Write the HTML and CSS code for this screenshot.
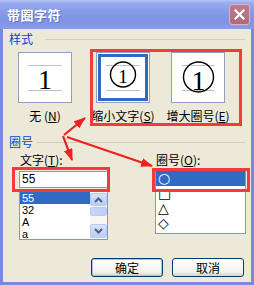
FILE: index.html
```html
<!DOCTYPE html>
<html>
<head>
<meta charset="utf-8">
<link rel="stylesheet" href="styles.css">
</head>
<body>
<div class="window">
  <div class="titlebar">
    <span class="title">带圈字符</span>
    <span class="close">
      <svg width="11" height="11" viewBox="0 0 11 11"><path d="M1.5 1.5 L9.5 9.5 M9.5 1.5 L1.5 9.5" stroke="#fff" stroke-width="2.2" stroke-linecap="square"/></svg>
    </span>
  </div>
  <div class="body">
    <div class="group-head"><span class="group-title">样式</span><span class="rule rule1"></span></div>
    <div class="styles">
      <div class="opt">
        <div class="preview">
          <svg width="52" height="49" viewBox="0 0 52 49">
            <line x1="9" y1="12.5" x2="43" y2="12.5" stroke="#C0C0C0"/>
            <line x1="9" y1="37.5" x2="43" y2="37.5" stroke="#C0C0C0"/>
            <text x="26" y="35.5" text-anchor="middle" class="digit" font-size="28">1</text>
          </svg>
        </div>
        <div class="opt-label">无 (<u>N</u>)</div>
      </div>
      <div class="opt opt2">
        <div class="preview selected">
          <svg width="52" height="49" viewBox="0 0 52 49">
            <line x1="9" y1="12.5" x2="43" y2="12.5" stroke="#C0C0C0"/>
            <line x1="9" y1="37.5" x2="43" y2="37.5" stroke="#C0C0C0"/>
            <circle cx="26" cy="21.5" r="12.5" fill="none" stroke="#000" stroke-width="1.4"/>
            <text x="26" y="30" text-anchor="middle" class="digit" font-size="19">1</text>
          </svg>
        </div>
        <div class="opt-label">缩小文字(<u>S</u>)</div>
      </div>
      <div class="opt opt3">
        <div class="preview">
          <svg width="52" height="49" viewBox="0 0 52 49">
            <line x1="10" y1="12.5" x2="42" y2="12.5" stroke="#C0C0C0"/>
            <line x1="10" y1="37.5" x2="42" y2="37.5" stroke="#C0C0C0"/>
            <circle cx="26.5" cy="24" r="15" fill="none" stroke="#000" stroke-width="1.4"/>
            <text x="26.5" y="37" text-anchor="middle" class="digit" font-size="28">1</text>
          </svg>
        </div>
        <div class="opt-label">增大圈号(<u>E</u>)</div>
      </div>
    </div>
    <div class="group-head head2"><span class="group-title">圈号</span><span class="rule rule2"></span></div>
    <div class="fields">
      <div class="col-left">
        <div class="field-label">文字(<u>T</u>):</div>
        <div class="input">55</div>
        <div class="listbox">
          <ul class="items">
            <li class="sel">55</li>
            <li>32</li>
            <li>A</li>
            <li>a</li>
          </ul>
          <div class="scrollbar">
            <div class="sb-btn">
              <svg width="9" height="6" viewBox="0 0 9 6"><path d="M1 5 L4.5 1.5 L8 5" fill="none" stroke="#4D6185" stroke-width="2"/></svg>
            </div>
            <div class="sb-thumb"></div>
            <div class="sb-track"></div>
            <div class="sb-btn down">
              <svg width="9" height="6" viewBox="0 0 9 6"><path d="M1 1 L4.5 4.5 L8 1" fill="none" stroke="#4D6185" stroke-width="2"/></svg>
            </div>
          </div>
        </div>
      </div>
      <div class="col-right">
        <div class="field-label">圈号(<u>O</u>):</div>
        <ul class="list2">
          <li class="sel">○</li>
          <li>□</li>
          <li>△</li>
          <li>◇</li>
        </ul>
      </div>
    </div>
    <div class="buttons">
      <button class="btn default">确定</button>
      <button class="btn">取消</button>
    </div>
  </div>
  <svg class="annot" width="254" height="285" viewBox="0 0 254 285">
    <defs>
      <marker id="ah" markerUnits="userSpaceOnUse" markerWidth="12" markerHeight="9" refX="11" refY="4.5" orient="auto">
        <path d="M0 0 L12 4.5 L0 9 Z" fill="#F02020"/>
      </marker>
    </defs>
    <g fill="none" stroke="#F23B3B" stroke-width="3">
      <rect x="91.5" y="50.5" width="149" height="74"/>
      <rect x="13.5" y="168.5" width="95" height="22"/>
      <rect x="153.5" y="169.5" width="95" height="21"/>
    </g>
    <g stroke="#F02020" stroke-width="2.2" fill="none">
      <line x1="64" y1="135" x2="85" y2="118" marker-end="url(#ah)"/>
      <line x1="63" y1="136" x2="72" y2="160" marker-end="url(#ah)"/>
      <line x1="67" y1="137" x2="152" y2="166" marker-end="url(#ah)"/>
    </g>
  </svg>
</div>
</body>
</html>
```

FILE: styles.css
```css
* { box-sizing: border-box; }
html, body { margin: 0; padding: 0; }
body {
  width: 254px;
  height: 285px;
  overflow: hidden;
  font-family: "Noto Sans CJK SC", "Liberation Sans", sans-serif;
  font-size: 12px;
  background: #ECE9D8;
  color: #000;
}
.window {
  position: relative;
  width: 254px;
  height: 285px;
  display: flex;
  flex-direction: column;
}
.titlebar {
  height: 29px;
  display: flex;
  align-items: center;
  padding: 0 4px 0 7px;
  background: linear-gradient(to bottom, #B6C5F5 0, #98ABEE 3px, #8A9DE8 10px, #7F93E3 20px, #8A9CE6 29px);
}
.title {
  color: #fff;
  font-weight: bold;
  font-size: 13px;
  letter-spacing: 0.5px;
  text-shadow: 1px 1px 0 #6473C4;
}
.close {
  margin-left: auto;
  width: 21px;
  height: 21px;
  border: 1px solid #D9B4C4;
  border-radius: 3px;
  background: linear-gradient(#BC7D8C, #AE6B7D);
  display: flex;
  align-items: center;
  justify-content: center;
}
.body {
  flex: 1;
  display: flex;
  flex-direction: column;
  background: #ECE9D8;
  border: 3px solid #7B89DC;
  border-top: 0;
  padding-top: 3px;
}
.group-head {
  display: flex;
  align-items: center;
  height: 14px;
  line-height: 14px;
  padding: 0 6px;
  color: #0046D5;
}
.rule {
  flex: 1;
  height: 1px;
  background: #D0CFBF;
}
.rule1 { margin-left: 12px; }
.rule2 { margin-left: 4px; }
.head2 { margin-top: 12px; }
.styles {
  display: flex;
  margin-top: 6px;
  padding-left: 15px;
}
.opt {
  width: 54px;
  display: flex;
  flex-direction: column;
  align-items: center;
}
.opt2 { margin-left: 24px; }
.opt3 { margin-left: 21px; }
.preview {
  width: 54px;
  height: 51px;
  border: 1px solid #8DA2BD;
  background: #fff;
}
.preview svg { display: block; }
.preview.selected {
  box-shadow: inset 0 0 0 1px #fff, inset 0 0 0 4px #3169C6;
}
.digit {
  font-family: "Liberation Serif", serif;
  fill: #000;
}
.opt-label {
  margin-top: 6px;
  line-height: 14px;
  white-space: nowrap;
}
.fields {
  display: flex;
  margin-top: 4px;
}
.col-left {
  margin-left: 16px;
  width: 89px;
}
.col-right {
  margin-left: 47px;
  width: 91px;
}
.field-label {
  line-height: 14px;
  padding-left: 1px;
  white-space: nowrap;
}
.input {
  margin-top: 4px;
  height: 17px;
  border: 1px solid #7F9DB9;
  background: #fff;
  padding-left: 2px;
  line-height: 15px;
  font-family: "Liberation Sans", sans-serif;
  font-size: 12px;
}
.listbox {
  margin-top: 3px;
  height: 49px;
  border: 1px solid #7F9DB9;
  background: #fff;
  display: flex;
}
.items {
  flex: 1;
  list-style: none;
  margin: 0;
  padding: 0;
  font-family: "Liberation Sans", sans-serif;
  font-size: 11px;
}
.items li {
  height: 12px;
  line-height: 12px;
  padding-left: 2px;
  overflow: hidden;
}
.sel {
  background: #316AC5;
  color: #fff;
}
.scrollbar {
  width: 17px;
  display: flex;
  flex-direction: column;
  padding: 1px 0;
  background: #F7F6F1;
}
.sb-btn {
  height: 13px;
  border: 1px solid #B8CBF4;
  border-radius: 2px;
  background: linear-gradient(#D6E2FD, #BACCF8);
  display: flex;
  align-items: center;
  justify-content: center;
}
.sb-btn.down { height: 14px; }
.sb-thumb {
  height: 9px;
  margin-top: 1px;
  border: 1px solid #B8CBF4;
  border-radius: 2px;
  background: linear-gradient(to right, #C9D7FB, #BBCDF8);
}
.sb-track { flex: 1; }
.list2 {
  list-style: none;
  margin: 3px 0 0;
  padding: 0;
  height: 64px;
  border: 1px solid #7F9DB9;
  background: #fff;
  font-family: "DejaVu Sans", sans-serif;
  font-size: 14px;
}
.list2 li {
  height: 15px;
  line-height: 15px;
  padding-left: 2px;
  overflow: hidden;
}
.buttons {
  margin-top: auto;
  display: flex;
  justify-content: flex-end;
  gap: 9px;
  padding: 0 7px 5px 0;
}
.btn {
  width: 72px;
  height: 19px;
  padding: 0;
  border: 1px solid #003C74;
  border-radius: 3px;
  background: linear-gradient(#FFFFFF, #F3F2EC 75%, #D8D2C6);
  font-family: "Noto Sans CJK SC", sans-serif;
  font-size: 12px;
  line-height: 17px;
  color: #000;
}
.btn.default {
  box-shadow: inset 0 0 0 1px #A8C0EE;
}
.annot {
  position: absolute;
  left: 0;
  top: 0;
  pointer-events: none;
}
```
